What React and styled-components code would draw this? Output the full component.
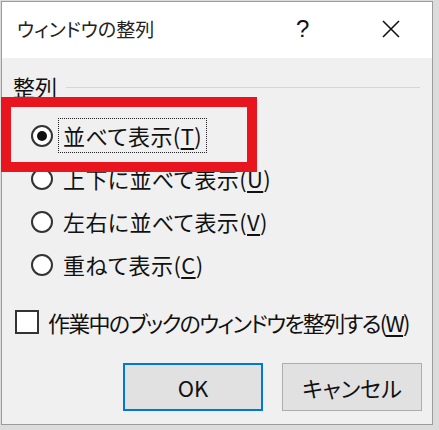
import React from 'react'
import styled, { createGlobalStyle } from 'styled-components'

const GlobalStyle = createGlobalStyle`
  html, body {
    margin: 0;
    padding: 0;
    background: #dcdcdc;
  }
  body {
    font-family: "Noto Sans CJK JP", "Noto Sans", sans-serif;
    color: #111;
  }
`

const Window = styled.div`
  margin: 1px 0 0 1px;
  width: 432px;
  height: 424px;
  border: 1px solid #9c9c9c;
  background: #f0f0f0;
  display: flex;
  flex-direction: column;
  box-sizing: border-box;
`

const TitleBar = styled.div`
  height: 56px;
  background: #fff;
  display: flex;
  align-items: center;
  padding-left: 15px;
  flex-shrink: 0;
`

const Title = styled.div`
  flex: 1;
  font-size: 19px;
  font-feature-settings: "palt";
  color: #222;
  margin-top: -3px;
`

const HelpButton = styled.div`
  width: 20px;
  font-size: 24px;
  font-family: "Liberation Sans", sans-serif;
  color: #111;
  margin-right: 66px;
  margin-top: -3px;
`

const CloseButton = styled.div`
  width: 18px;
  height: 18px;
  margin-right: 32px;
  margin-top: -3px;
  display: flex;
`

const Body = styled.div`
  position: relative;
  flex: 1;
  padding: 16px 13px 14px 11px;
  display: flex;
  flex-direction: column;
`

const GroupHeader = styled.div`
  display: flex;
  align-items: center;
  height: 24px;
  gap: 9px;
`

const GroupLabel = styled.span`
  font-size: 22px;
  line-height: 24px;
`

const GroupLine = styled.div`
  flex: 1;
  height: 1px;
  background: #d5d5d5;
  margin-top: 2px;
  margin-right: -1px;
`

const OptionList = styled.div`
  margin-top: 16px;
  display: flex;
  flex-direction: column;
`

const OptionRow = styled.div`
  height: 43px;
  display: flex;
  align-items: center;
  padding-left: 18px;
  gap: 5px;
`

const Radio = styled.div`
  width: 22px;
  height: 22px;
  border-radius: 50%;
  border: 2px solid #333;
  box-sizing: border-box;
  display: flex;
  align-items: center;
  justify-content: center;
  background: #fff;
  &::after {
    content: "";
    width: 10px;
    height: 10px;
    border-radius: 50%;
    background: ${p => (p.checked ? '#111' : 'transparent')};
  }
`

const OptionText = styled.span`
  font-size: 22px;
  line-height: 33px;
  padding: 0 4px;
  font-feature-settings: "palt";
  letter-spacing: 0.4px;
  white-space: nowrap;
  border: 1px dotted ${p => (p.focused ? '#222' : 'transparent')};
`

const Key = styled.u`
  text-underline-offset: 3px;
`

const CheckRow = styled.div`
  margin-top: 14px;
  height: 43px;
  display: flex;
  align-items: center;
  padding-left: 2px;
  gap: 9px;
`

const CheckBox = styled.div`
  width: 24px;
  height: 24px;
  flex-shrink: 0;
  border: 2px solid #333;
  box-sizing: border-box;
  background: #fff;
`

const CheckText = styled.span`
  font-size: 22px;
  font-feature-settings: "palt";
  letter-spacing: -1.7px;
  white-space: nowrap;
`

const ButtonRow = styled.div`
  margin-top: 20px;
  display: flex;
  justify-content: flex-end;
  gap: 19px;
  margin-right: -3px;
`

const Button = styled.button`
  width: 140px;
  height: 48px;
  background: #e1e1e1;
  border: ${p => (p.primary ? '2px solid #0078d7' : '1px solid #adadad')};
  font-family: "Noto Sans CJK JP", "Noto Sans", sans-serif;
  font-size: 22px;
  color: #111;
  font-feature-settings: "palt";
  padding: 0;
`

const Highlight = styled.div`
  position: absolute;
  left: -1px;
  top: 39px;
  width: 256px;
  height: 75px;
  border: 10px solid #e8141e;
  box-sizing: border-box;
  pointer-events: none;
`

const options = [
  { label: '並べて表示', key: 'T', checked: true },
  { label: '上下に並べて表示', key: 'U' },
  { label: '左右に並べて表示', key: 'V' },
  { label: '重ねて表示', key: 'C' },
]

const App = () => {
  return (
    <>
      <GlobalStyle />
      <Window>
        <TitleBar>
          <Title>ウィンドウの整列</Title>
          <HelpButton>?</HelpButton>
          <CloseButton>
            <svg width="18" height="18" viewBox="0 0 18 18">
              <path d="M1 1 L17 17 M17 1 L1 17" stroke="#111" strokeWidth="1.6" />
            </svg>
          </CloseButton>
        </TitleBar>
        <Body>
          <GroupHeader>
            <GroupLabel>整列</GroupLabel>
            <GroupLine />
          </GroupHeader>
          <OptionList>
            {options.map(o => (
              <OptionRow key={o.key}>
                <Radio checked={o.checked} />
                <OptionText focused={o.checked}>
                  {o.label}(<Key>{o.key}</Key>)
                </OptionText>
              </OptionRow>
            ))}
          </OptionList>
          <CheckRow>
            <CheckBox />
            <CheckText>
              作業中のブックのウィンドウを整列する(<Key>W</Key>)
            </CheckText>
          </CheckRow>
          <ButtonRow>
            <Button primary>OK</Button>
            <Button>キャンセル</Button>
          </ButtonRow>
          <Highlight />
        </Body>
      </Window>
    </>
  )
}

export default App
